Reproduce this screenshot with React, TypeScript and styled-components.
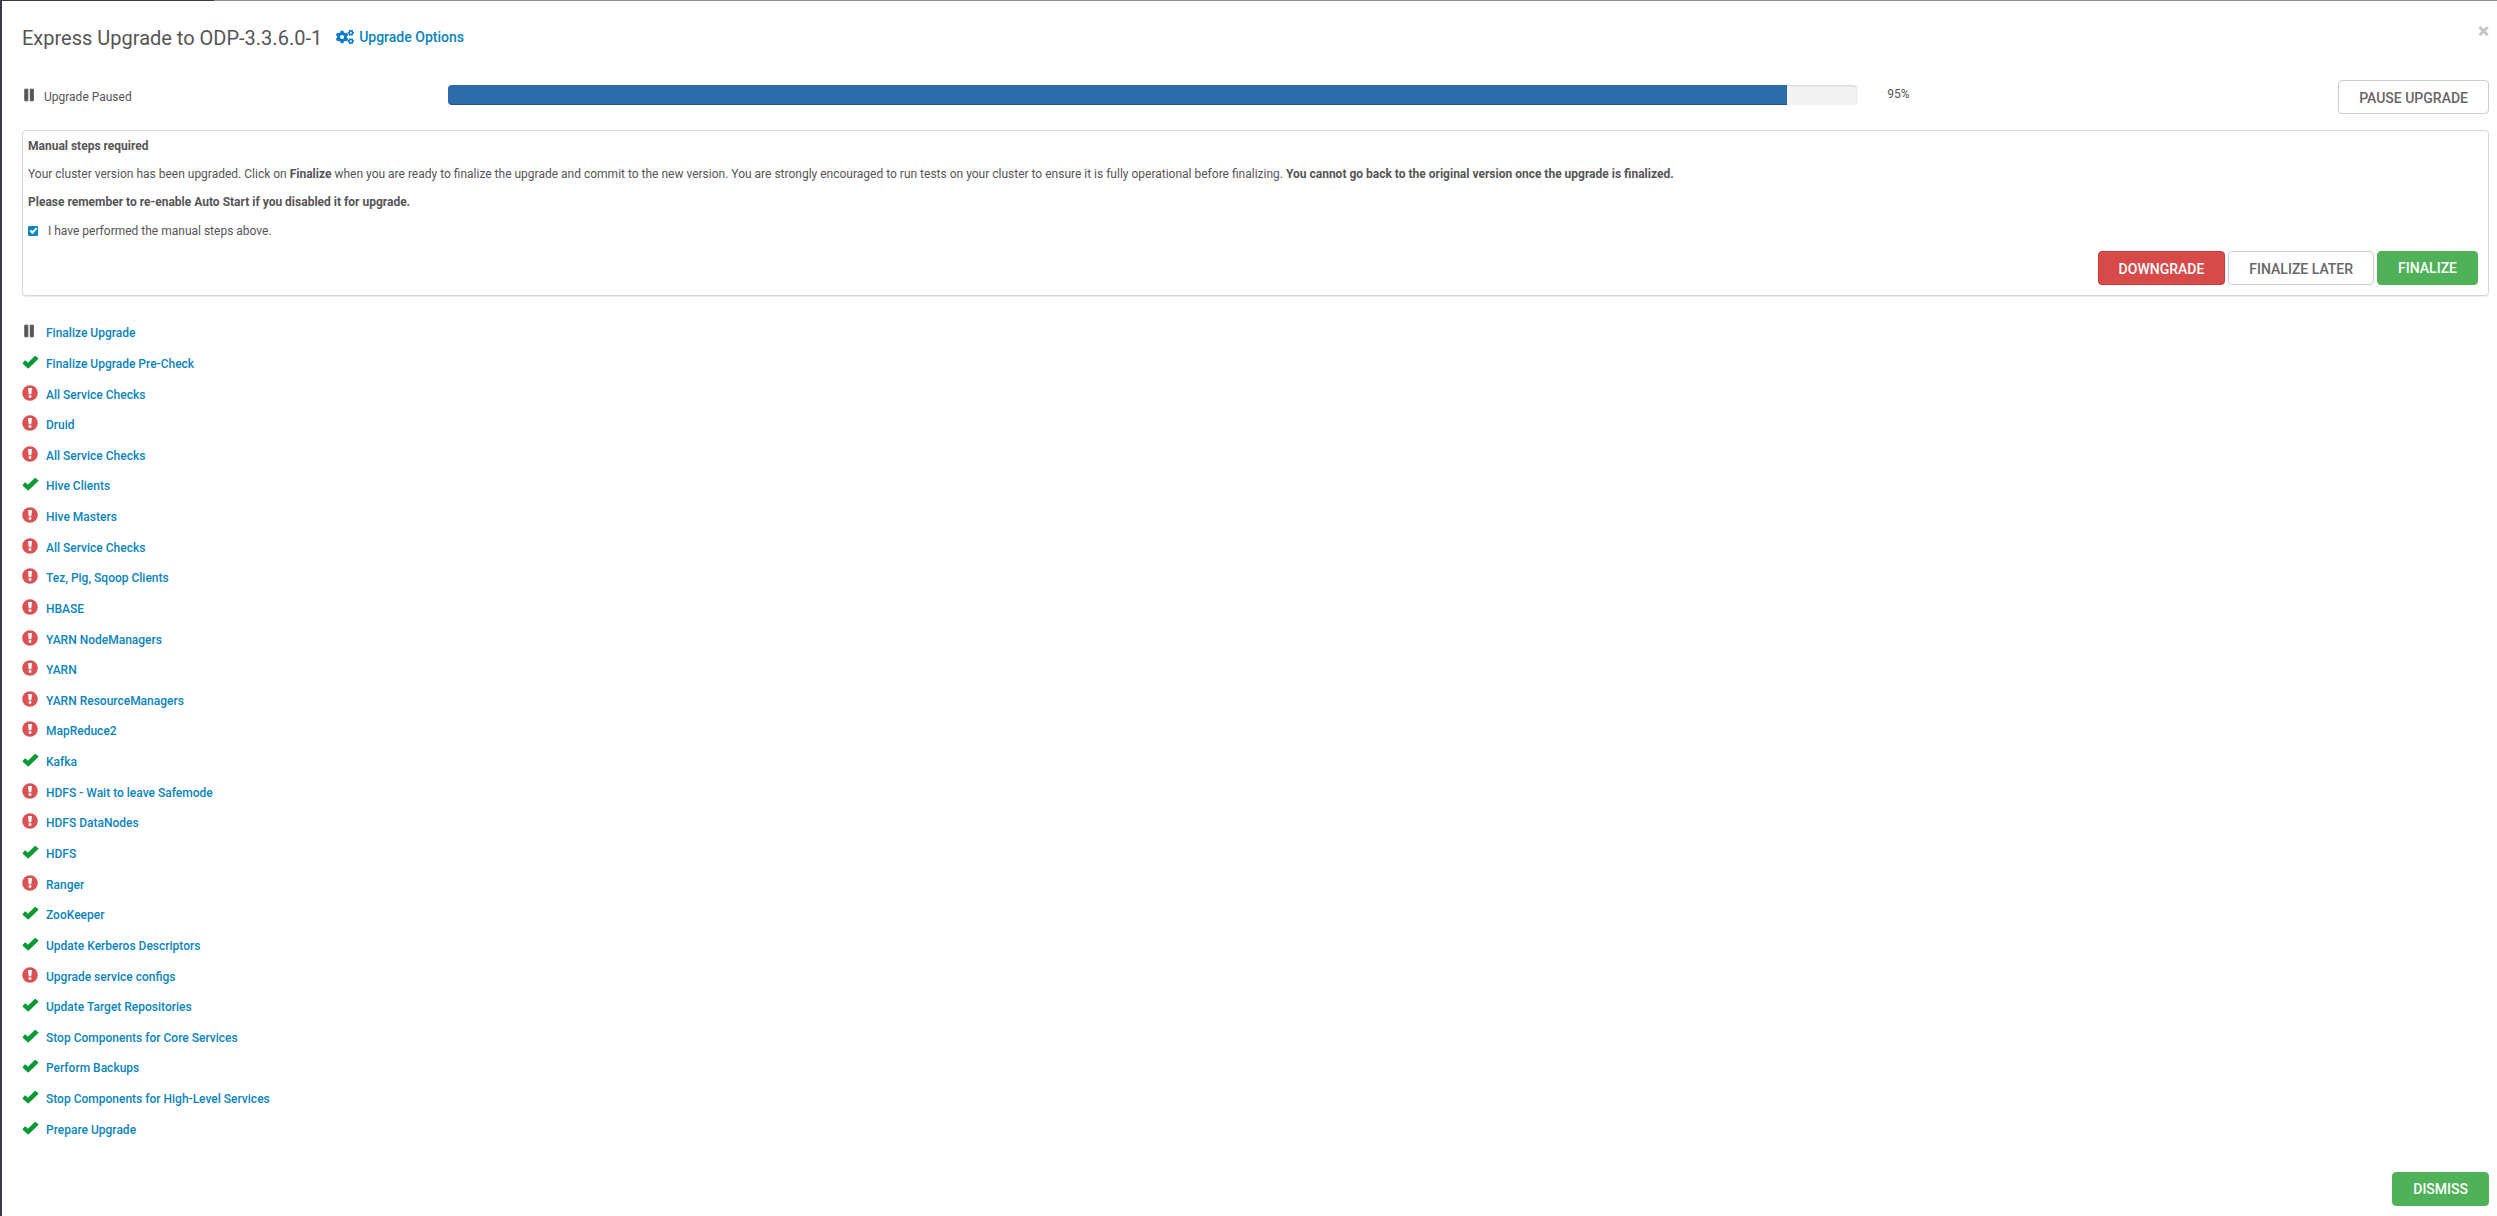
import React from "react";
import styled, { createGlobalStyle } from "styled-components";
import { FaCogs } from "react-icons/fa";

const GlobalStyle = createGlobalStyle`
  *, *::before, *::after { box-sizing: border-box; }
  body {
    margin: 0;
    background: #fff;
    color: #555;
    font: 12px/20px Roboto, "Liberation Sans", sans-serif;
  }
`;

const Backdrop = styled.div`
  display: flex;
  min-height: 100vh;
  padding: 1px 0 0 2px;
  background: linear-gradient(90deg, #3b3b46 214px, #8f8f8f 214px);
`;

const Modal = styled.main`
  flex: 1;
  display: flex;
  flex-direction: column;
  padding: 20px 8px 10px 20px;
  background: #fff;
`;

const Header = styled.header`
  display: flex;
  align-items: flex-start;
  height: 58px;
`;

const Title = styled.h1`
  margin: 0;
  padding-top: 4px;
  font-size: 20px;
  line-height: 26px;
  font-weight: 400;
`;

const OptionsLink = styled.a`
  display: flex;
  align-items: center;
  gap: 5px;
  margin-left: 14px;
  padding-top: 6px;
  color: #0a84bb;
  font-size: 14px;
  font-weight: 500;
  text-decoration: none;

  svg {
    color: #0a7ac8;
    font-size: 18px;
  }
`;

const CloseButton = styled.button`
  margin-left: auto;
  padding: 0;
  border: 0;
  background: none;
  color: #c4c4c4;
  font: 900 21px/20px Roboto, "Liberation Sans", sans-serif;
`;

const StatusRow = styled.section`
  display: grid;
  grid-template-columns: 2fr 7fr 3fr;
  align-items: start;
  height: 51px;
`;

const StatusLabel = styled.div`
  display: flex;
  align-items: center;
  gap: 5px;
  padding-top: 8px;
`;

const ProgressCell = styled.div`
  padding: 6px 15px 0;
`;

const Track = styled.div`
  height: 20px;
  overflow: hidden;
  border-radius: 4px;
  background: #f3f3f3;
  box-shadow: inset 0 1px 2px rgba(0, 0, 0, 0.14);
`;

const Bar = styled.div`
  height: 100%;
  background: #2c6cab;
  box-shadow: inset 0 -1px 0 rgba(0, 0, 0, 0.2);
`;

const PercentCell = styled.div`
  display: flex;
  justify-content: space-between;
  align-items: flex-start;
  padding: 1px 0 0 15px;
`;

const Percent = styled.span`
  padding-top: 4px;
`;

const buttonTones = {
  plain: { bg: "#fff", border: "#c9ced3", text: "#666", padding: "2px 20px 0" },
  danger: { bg: "#d64a49", border: "#d03a3b", text: "#fff", padding: "2px 20px 0" },
  success: { bg: "#4fb259", border: "#4fb259", text: "#fff", padding: "0 20px" },
};

const Button = styled.button<{ $tone: keyof typeof buttonTones }>`
  height: 34px;
  padding: ${(p) => buttonTones[p.$tone].padding};
  border: 1px solid ${(p) => buttonTones[p.$tone].border};
  border-radius: 4px;
  background: ${(p) => buttonTones[p.$tone].bg};
  color: ${(p) => buttonTones[p.$tone].text};
  font: 500 14px/20px Roboto, "Liberation Sans", sans-serif;
  text-transform: uppercase;
`;

const Panel = styled.section`
  padding: 5px 10px 10px 5px;
  border: 1px solid #d5d5d5;
  border-radius: 4px;
  box-shadow: 0 1px 1px rgba(0, 0, 0, 0.08);
`;

const Paragraph = styled.p`
  margin: 0 0 8px;
`;

const CheckLabel = styled.label`
  display: flex;
  align-items: center;
  gap: 10px;
  margin-top: 9px;
`;

const CheckBox = styled.input`
  appearance: none;
  display: grid;
  place-items: center;
  width: 10px;
  height: 10px;
  margin: 0;
  border: 1px solid #0a86bd;
  border-radius: 1px;
  background: #fff;

  &:checked { background: #0a86bd; }
  &:checked::before {
    content: "";
    width: 7px;
    height: 4px;
    margin-top: -2px;
    border: solid #fff;
    border-width: 0 0 2px 2px;
    transform: rotate(-45deg);
  }
`;

const Actions = styled.div`
  display: flex;
  justify-content: flex-end;
  gap: 3px;
  margin-top: 10px;
`;

const Steps = styled.ul`
  flex: 1;
  display: grid;
  grid-auto-rows: 1fr;
  margin: 22px 0 27px;
  padding: 0;
  list-style: none;
`;

const Step = styled.li`
  display: flex;
  align-items: center;
  gap: 7px;
`;

const StepLink = styled.a`
  color: #0a84bb;
  font-weight: 500;
  text-decoration: none;
`;

const Glyph = styled.svg`
  display: block;
  flex: none;
  width: 17px;
  height: 16px;
  margin-bottom: 4px;
`;

const Footer = styled.footer`
  display: flex;
  justify-content: flex-end;
`;

type Status = "paused" | "done" | "failed";

function StatusIcon({ status }: { status: Status }) {
  if (status === "paused") {
    return (
      <Glyph viewBox="0 0 17 16" aria-hidden="true">
        <path fill="#555" d="M2.8 2.2h3v11.6h-3zM8.3 2.2h3v11.6h-3z" stroke="#555" strokeWidth="1" strokeLinejoin="round" />
      </Glyph>
    );
  }
  if (status === "done") {
    return (
      <Glyph viewBox="0 0 17 16" aria-hidden="true">
        <path fill="#069a35" d="M.7 8.9 2.9 6.6q.4-.4.8 0l2.2 2.2 6.9-6.9q.4-.4.8 0l2.7 2.4q.4.4 0 .8L6.7 14.3q-.5.5-1 0L.7 9.7q-.4-.4 0-.8z" />
      </Glyph>
    );
  }
  return (
    <Glyph viewBox="0 0 17 16" aria-hidden="true">
      <circle cx="8" cy="8" r="7.8" fill="#db5254" />
      <path fill="#fff" d="M6 3h4l-.7 6.2H6.7zM6.7 10.3h2.6v2.4H6.7z" />
    </Glyph>
  );
}

const steps: [string, Status][] = [
  ["Finalize Upgrade", "paused"],
  ["Finalize Upgrade Pre-Check", "done"],
  ["All Service Checks", "failed"],
  ["Druid", "failed"],
  ["All Service Checks", "failed"],
  ["Hive Clients", "done"],
  ["Hive Masters", "failed"],
  ["All Service Checks", "failed"],
  ["Tez, Pig, Sqoop Clients", "failed"],
  ["HBASE", "failed"],
  ["YARN NodeManagers", "failed"],
  ["YARN", "failed"],
  ["YARN ResourceManagers", "failed"],
  ["MapReduce2", "failed"],
  ["Kafka", "done"],
  ["HDFS - Wait to leave Safemode", "failed"],
  ["HDFS DataNodes", "failed"],
  ["HDFS", "done"],
  ["Ranger", "failed"],
  ["ZooKeeper", "done"],
  ["Update Kerberos Descriptors", "done"],
  ["Upgrade service configs", "failed"],
  ["Update Target Repositories", "done"],
  ["Stop Components for Core Services", "done"],
  ["Perform Backups", "done"],
  ["Stop Components for High-Level Services", "done"],
  ["Prepare Upgrade", "done"],
];

export default function App() {
  const progress = 95;
  return (
    <>
      <GlobalStyle />
      <Backdrop>
        <Modal>
          <Header>
            <Title>Express Upgrade to ODP-3.3.6.0-1</Title>
            <OptionsLink href="#options">
              <FaCogs aria-hidden="true" />
              Upgrade Options
            </OptionsLink>
            <CloseButton type="button" aria-label="Close">×</CloseButton>
          </Header>

          <StatusRow>
            <StatusLabel>
              <StatusIcon status="paused" />
              Upgrade Paused
            </StatusLabel>
            <ProgressCell>
              <Track role="progressbar" aria-label="Upgrade progress" aria-valuenow={progress} aria-valuemin={0} aria-valuemax={100}>
                <Bar style={{ width: `${progress}%` }} />
              </Track>
            </ProgressCell>
            <PercentCell>
              <Percent>{progress}%</Percent>
              <Button type="button" $tone="plain">Pause Upgrade</Button>
            </PercentCell>
          </StatusRow>

          <Panel>
            <Paragraph><b>Manual steps required</b></Paragraph>
            <Paragraph>
              Your cluster version has been upgraded. Click on <b>Finalize</b> when you are ready to finalize the upgrade
              and commit to the new version. You are strongly encouraged to run tests on your cluster to ensure it is
              fully operational before finalizing. <b>You cannot go back to the original version once the upgrade is finalized.</b>
            </Paragraph>
            <Paragraph><b>Please remember to re-enable Auto Start if you disabled it for upgrade.</b></Paragraph>
            <CheckLabel>
              <CheckBox type="checkbox" defaultChecked />
              I have performed the manual steps above.
            </CheckLabel>
            <Actions>
              <Button type="button" $tone="danger">Downgrade</Button>
              <Button type="button" $tone="plain">Finalize Later</Button>
              <Button type="button" $tone="success">Finalize</Button>
            </Actions>
          </Panel>

          <Steps>
            {steps.map(([name, status], index) => (
              <Step key={index}>
                <StatusIcon status={status} />
                <StepLink href={`#step-${index}`}>{name}</StepLink>
              </Step>
            ))}
          </Steps>

          <Footer>
            <Button type="button" $tone="success">Dismiss</Button>
          </Footer>
        </Modal>
      </Backdrop>
    </>
  );
}
